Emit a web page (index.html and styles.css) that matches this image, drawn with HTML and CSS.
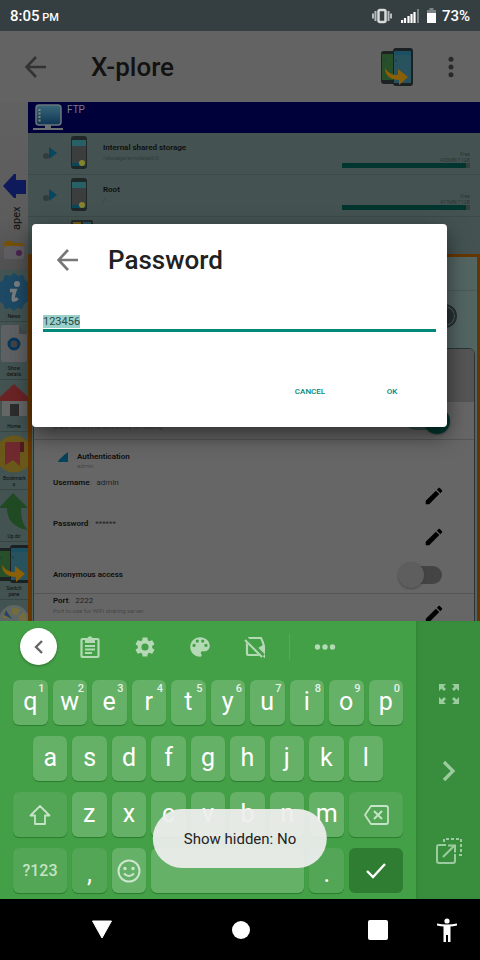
FILE: index.html
```html
<!DOCTYPE html>
<html lang="en">
<head>
<meta charset="utf-8">
<meta name="viewport" content="width=device-width, initial-scale=1">
<title>X-plore</title>
<link rel="stylesheet" href="styles.css">
</head>
<body>
<svg class="defs" aria-hidden="true">
  <symbol id="back" viewBox="0 0 22 22"><path d="M21 11H2M11 1L1.500 11l9.500 10" fill="none" stroke="currentColor" stroke-width="2.600"/></symbol>
  <symbol id="pencil" viewBox="0 0 24 24"><path fill="currentColor" d="M3 17.250V21h3.750L17.810 9.940l-3.750-3.750L3 17.250zM20.710 7.040c.39-.39.39-1.020 0-1.410l-2.340-2.340c-.39-.39-1.020-.39-1.410 0l-1.830 1.830 3.750 3.750 1.830-1.830z"/></symbol>
  <symbol id="phones" viewBox="0 0 32 38">
    <rect x="0" y="3" width="16" height="33" rx="3" fill="#1d2222"/><rect x="1" y="6" width="14" height="26" fill="#27502a"/>
    <rect x="12" y="0" width="20" height="38" rx="3" fill="#1b2022"/><rect x="13" y="3" width="17" height="32" fill="#28525e"/><rect x="13" y="3" width="17" height="4" fill="#1b4f62"/>
    <path d="M3 11v3M15 11v3" stroke="#1c3f40"/>
    <path d="M4 20c4 6 8 7 13 7v-6l10 8-9 8v-5C10 32 4 28 4 20z" fill="#8a5f08"/>
  </symbol>
  <symbol id="phone" viewBox="0 0 18 34">
    <rect x="1" y="0" width="16" height="33" rx="3" fill="#202727"/><rect x="2" y="4" width="14" height="26" fill="#3b3d3e"/><rect x="2" y="4" width="14" height="6" fill="#276067"/><rect x="2" y="27" width="14" height="3" fill="#07485b"/><circle cx="12" cy="27" r="3" fill="#85842c"/>
  </symbol>
  <symbol id="expand" viewBox="0 0 16 14"><circle cx="4" cy="10" r="3" fill="#323c3c"/><path d="M7 1l8 6-8 6z" fill="#05475f"/></symbol>
</svg>

<header class="status">
  <span class="clock">8:05 <small>PM</small></span>
  <svg class="vibrate" width="20" height="16" viewBox="0 0 20 16"><path d="M1 5.500v5M3.500 3v10M19 5.500v5M16.500 3v10" stroke="#b6bbbb" stroke-width="2"/><rect x="6.500" y="2" width="7" height="12" rx="1.500" fill="none" stroke="#d8dada" stroke-width="2.500"/></svg>
  <svg class="signal" width="18" height="14" viewBox="0 0 18 14"><path d="M1 14v-3M4 14V9M7.500 14V7M10.500 14V5M13.500 14V3" stroke="#fff" stroke-width="2.200"/><path d="M17 14V0" stroke="#7c8485" stroke-width="2"/></svg>
  <svg class="battery" width="9" height="15" viewBox="0 0 9 15"><path d="M2.500 0h4v2H9v3H0V2h2.500z" fill="#7b8384"/><path d="M0 5h9v10H0z" fill="#fff"/></svg>
  <span class="percent">73%</span>
</header>

<main class="app">
  <div class="toolbar">
    <button class="icon-button" aria-label="Back"><svg width="22" height="22"><use href="#back"/></svg></button>
    <h1>X-plore</h1>
    <button class="icon-button switch-pane" aria-label="Switch pane"><svg width="32" height="38"><use href="#phones"/></svg></button>
    <button class="icon-button" aria-label="More"><svg width="6" height="22" viewBox="0 0 6 22" fill="#292929"><circle cx="3" cy="3.300" r="2.500"/><circle cx="3" cy="11" r="2.500"/><circle cx="3" cy="18.700" r="2.500"/></svg></button>
  </div>

  <div class="browser">
    <nav class="rail">
      <div class="tab">
        <svg width="23" height="24" viewBox="0 0 23 24"><path d="M0 12L11 0h2v6h10v14H13v4h-2z" fill="#0e1a5c"/></svg>
        <span>apex</span>
        <svg width="20" height="18" viewBox="0 0 20 18"><path d="M0 3q0-3 3-3h5l2 2h9v8H0z" fill="#745109"/><rect x="0" y="5" width="20" height="13" rx="2" fill="#5f5d62"/><circle cx="15" cy="12" r="3" fill="#4b244f"/></svg>
      </div>
      <a href="#news"><svg viewBox="0 0 28 38"><path d="M14 0l4 3 5-1 2 5 4 3-1 5 2 4-2 4 1 5-5 3-2 5-5-1-3 3-4-3-5 1-2-5-4-3 1-5-2-4 2-4-1-5 4-3 2-5 5 1z" fill="#1d4964"/><circle cx="17" cy="11" r="3" fill="#777d80"/><path d="M10 17.500h5q-3 9-1.500 9.500 2 .5 4-2" fill="none" stroke="#777d80" stroke-width="3.500"/></svg>News</a>
      <a href="#details"><svg viewBox="0 0 28 38"><path d="M3 0h16l8 9v26q0 2-2 2H3q-2 0-2-2V2q0-2 2-2z" fill="#5e6061"/><path d="M19 0l8 9h-8z" fill="#454949"/><circle cx="14" cy="19" r="5" fill="#444" stroke="#06375e" stroke-width="3"/></svg>Show details</a>
      <a href="#home"><svg viewBox="0 0 28 38"><path d="M2 18h25v15H2z" fill="#656767"/><path d="M14 1l14 13v4H0v-4z" fill="#6b2325"/><path d="M10 21h9v12h-9z" fill="#2c2c2c"/></svg>Home</a>
      <a href="#bookmarks"><svg viewBox="0 0 28 38"><circle cx="14" cy="19" r="18.500" fill="#6a571a"/><path d="M5 9q0-2 2-2h17v10h-4v14l-7-6-8 5z" fill="#70292f"/><path d="M20 7h4v10h-4z" fill="#511a20"/></svg>Bookmark s</a>
      <a href="#up"><svg viewBox="0 0 28 38"><path d="M13 0l15 15h-7c0 11 2 17 7 22C15 35 7 28 7 15H-1z" fill="#1f4a23"/></svg>Up dir</a>
      <a href="#switch"><svg viewBox="2 0 28 38"><use href="#phones" width="32" height="38"/></svg>Switch pane</a>
      <a href="#tools" aria-label="Tools"><svg viewBox="0 0 28 38"><circle cx="14" cy="17" r="15" fill="#5d6667"/><circle cx="14" cy="17" r="9" fill="none" stroke="#756c3d" stroke-width="7" stroke-dasharray="7 3"/><path d="M4 12l8 4-6-9z" fill="#26456a"/></svg></a>
    </nav>

    <div class="panes">
      <div class="location">
        <svg width="32" height="27" viewBox="0 0 32 27"><defs><linearGradient id="screen" x2="0" y2="1"><stop stop-color="#3b687c"/><stop offset="1" stop-color="#0e3553"/></linearGradient></defs><rect x="4" y="1" width="25" height="20" rx="3" fill="url(#screen)" stroke="#68777b" stroke-width="1.500"/><path d="M7.500 5v13" stroke="#83867c" stroke-width="2" stroke-dasharray="2 1.500"/><path d="M13 21h6v3h12v2H1v-2h12z" fill="#6c716f"/></svg>
        <span>FTP</span>
      </div>
      <section class="storage">
        <div class="volume">
          <svg width="16" height="14"><use href="#expand"/></svg><svg width="18" height="34"><use href="#phone"/></svg>
          <div class="volume-name"><b>Internal shared storage</b><span>/storage/emulated/0</span></div>
          <div class="usage"><span>Free</span><span>420MB/11GB</span><div class="bar"></div></div>
        </div>
        <div class="volume">
          <svg width="16" height="14"><use href="#expand"/></svg><svg width="18" height="34"><use href="#phone"/></svg>
          <div class="volume-name"><b>Root</b><span>/</span></div>
          <div class="usage"><span>Free</span><span>417MB/11GB</span><div class="bar"></div></div>
        </div>
        <div class="volume next"><svg width="22" height="20" viewBox="0 0 22 20"><rect width="22" height="20" rx="2" fill="#252c2b"/><path d="M2 2h8v16H2z" fill="#755b10"/><path d="M12 2h8v16h-8z" fill="#255563"/></svg></div>
      </section>

      <section class="server">
        <div class="server-title"></div>
        <div class="server-state"><span class="dial"></span></div>
        <div class="card">
          <div class="card-head"></div>
          <div class="row readonly"><label class="hint" for="readonly">Share files on this device only for reading.</label><input class="switch" type="checkbox" id="readonly" checked></div>
          <div class="auth">
            <svg width="11" height="11" viewBox="0 0 11 11"><path d="M10 0v10H0c0-2 6-7 10-10z" fill="#06435c"/></svg>
            <div><b>Authentication</b><span class="hint">admin</span></div>
          </div>
          <div class="field"><p><b>Username</b><i>:</i> admin</p><button class="icon-button" aria-label="Edit username"><svg width="22" height="22"><use href="#pencil"/></svg></button></div>
          <div class="field"><p><b>Password</b><i>:</i> ******</p><button class="icon-button" aria-label="Edit password"><svg width="22" height="22"><use href="#pencil"/></svg></button></div>
          <div class="row"><label for="anonymous"><b>Anonymous access</b></label><input class="switch" type="checkbox" id="anonymous"></div>
          <div class="field"><div><p><b>Port</b><i>:</i> 2222</p><span class="hint">Port to use for WiFi sharing server.</span></div><button class="icon-button" aria-label="Edit port"><svg width="22" height="22"><use href="#pencil"/></svg></button></div>
        </div>
      </section>
    </div>
  </div>

  <form class="dialog" role="dialog" aria-labelledby="dialog-title">
    <div class="dialog-head">
      <button type="button" class="icon-button" aria-label="Close"><svg width="22" height="22"><use href="#back"/></svg></button>
      <h2 id="dialog-title">Password</h2>
    </div>
    <input class="password" id="password" type="text" value="123456" aria-labelledby="dialog-title" autofocus>
    <div class="actions"><button type="button">CANCEL</button><button type="button">OK</button></div>
  </form>
</main>

<section class="keyboard">
  <div class="board">
    <div class="tools">
      <button class="collapse" aria-label="Collapse"><svg width="12" height="16" viewBox="0 0 12 16"><path d="M9 2L3 8l6 6" fill="none" stroke="#666" stroke-width="2.400"/></svg></button>
      <button aria-label="Clipboard"><svg width="20" height="24" viewBox="0 0 20 24"><rect x="1.500" y="4" width="17" height="18" rx="1" fill="none" stroke="currentColor" stroke-width="2.200"/><path d="M5 3h2.500a2.700 2.700 0 0 1 5 0H15v5H5z" fill="currentColor"/><path d="M5 11h10M5 14.500h10M5 18h7" stroke="currentColor" stroke-width="1.800"/></svg></button>
      <button aria-label="Settings"><svg width="24" height="24" viewBox="0 0 24 24"><path fill="currentColor" d="M19.140 12.940c.04-.3.06-.61.06-.94 0-.32-.02-.64-.07-.94l2.030-1.580c.18-.14.23-.41.12-.61l-1.920-3.320c-.12-.22-.37-.29-.59-.22l-2.390.96c-.5-.38-1.030-.7-1.620-.94l-.36-2.540c-.04-.24-.24-.41-.48-.41h-3.840c-.24 0-.43.17-.47.41l-.36 2.540c-.59.24-1.130.57-1.620.94l-2.390-.96c-.22-.08-.47 0-.59.22L2.740 8.870c-.12.21-.08.47.12.61l2.030 1.580c-.05.3-.09.63-.09.94s.02.64.07.94l-2.030 1.580c-.18.14-.23.41-.12.61l1.920 3.320c.12.22.37.29.59.22l2.390-.96c.5.38 1.030.7 1.620.94l.36 2.540c.05.24.24.41.48.41h3.840c.24 0 .44-.17.47-.41l.36-2.540c.59-.24 1.130-.56 1.620-.94l2.390.96c.22.08.47 0 .59-.22l1.920-3.320c.12-.22.07-.47-.12-.61l-2.010-1.580zM12 15.600a3.600 3.600 0 1 1 0-7.200 3.600 3.600 0 0 1 0 7.200z"/></svg></button>
      <button aria-label="Theme"><svg width="26" height="26" viewBox="0 0 24 24"><path fill="currentColor" fill-rule="evenodd" d="M12 3c-4.970 0-9 4.030-9 9s4.030 9 9 9c.83 0 1.500-.67 1.500-1.500 0-.39-.15-.74-.39-1.010-.23-.26-.38-.61-.38-.99 0-.83.67-1.500 1.500-1.500H16c2.760 0 5-2.240 5-5 0-4.420-4.030-8-9-8zM6.500 12a1.500 1.500 0 1 1 0-3 1.500 1.500 0 0 1 0 3zm3-4a1.500 1.500 0 1 1 0-3 1.500 1.500 0 0 1 0 3zm5 0a1.500 1.500 0 1 1 0-3 1.500 1.500 0 0 1 0 3zm3 4a1.500 1.500 0 1 1 0-3 1.500 1.500 0 0 1 0 3z"/></svg></button>
      <button aria-label="Stickers off"><svg width="22" height="22" viewBox="0 0 22 22"><path d="M4 2h13q2 4 3 8v10l-6-6" fill="none" stroke="currentColor" stroke-width="2"/><path d="M3 6v12q0 1 1 1h12" fill="none" stroke="currentColor" stroke-width="2.200"/><path d="M10 9l4 3 5-3v10z" fill="currentColor"/><path d="M2 3l17 17" stroke="#44a047" stroke-width="5"/><path d="M1 4l17 17" stroke="currentColor" stroke-width="2"/></svg></button>
      <span class="divider"></span>
      <button aria-label="More tools"><svg width="22" height="6" viewBox="0 0 22 6" fill="currentColor"><circle cx="3.500" cy="3" r="2.700"/><circle cx="11" cy="3" r="2.700"/><circle cx="18.500" cy="3" r="2.700"/></svg></button>
    </div>
    <div class="keys">
      <button>q<sup>1</sup></button><button>w<sup>2</sup></button><button>e<sup>3</sup></button><button>r<sup>4</sup></button><button>t<sup>5</sup></button><button>y<sup>6</sup></button><button>u<sup>7</sup></button><button>i<sup>8</sup></button><button>o<sup>9</sup></button><button>p<sup>0</sup></button>
    </div>
    <div class="keys inset">
      <button>a</button><button>s</button><button>d</button><button>f</button><button>g</button><button>h</button><button>j</button><button>k</button><button>l</button>
    </div>
    <div class="keys">
      <button class="wide dim" aria-label="Shift"><svg width="24" height="22" viewBox="0 0 24 22"><path d="M12 2L2.500 11.500H7V20h10v-8.500h4.500z" fill="none" stroke="currentColor" stroke-width="1.800" stroke-linejoin="round"/></svg></button>
      <button>z</button><button>x</button><button>c</button><button>v</button><button>b</button><button>n</button><button>m</button>
      <button class="wide dim" aria-label="Backspace"><svg width="26" height="20" viewBox="0 0 26 20"><path d="M8 1h15q2 0 2 2v14q0 2-2 2H8L2 10z" fill="none" stroke="currentColor" stroke-width="1.800" stroke-linejoin="round"/><path d="M11 6l8 8M19 6l-8 8" stroke="currentColor" stroke-width="2"/></svg></button>
    </div>
    <div class="keys last">
      <button class="wide dim symbols">?123</button>
      <button class="dim low">,</button>
      <button class="soft" aria-label="Emoji"><svg width="24" height="24" viewBox="0 0 24 24"><circle cx="12" cy="12" r="10.500" fill="none" stroke="currentColor" stroke-width="2"/><circle cx="8" cy="9.500" r="1.700" fill="currentColor"/><circle cx="16" cy="9.500" r="1.700" fill="currentColor"/><path d="M7 14.500q5 5 10 0" fill="none" stroke="currentColor" stroke-width="2"/></svg></button>
      <button class="space" aria-label="Space"></button>
      <button class="dim low">.</button>
      <button class="wide enter" aria-label="Done"><svg width="22" height="18" viewBox="0 0 22 18"><path d="M2 9l6 6L20 2" fill="none" stroke="#fff" stroke-width="2.400"/></svg></button>
    </div>
  </div>
  <aside class="side">
    <button aria-label="Full size"><svg width="20" height="20" viewBox="0 0 20 20"><path d="M0 0h7L4.500 2.500 7 5 5 7 2.500 4.500 0 7zM20 0v7l-2.500-2.500L15 7l-2-2 2.500-2.500L13 0zM0 20v-7l2.500 2.500L5 13l2 2-2.500 2.500L7 20zM20 20h-7l2.500-2.500L13 15l2-2 2.500 2.500L20 13z" fill="currentColor"/></svg></button>
    <button aria-label="Move right"><svg width="14" height="22" viewBox="0 0 14 22"><path d="M2 2l9 9-9 9" fill="none" stroke="currentColor" stroke-width="3.200"/></svg></button>
    <button aria-label="Float"><svg width="26" height="26" viewBox="0 0 26 26"><path d="M10 7H3q-2 0-2 2v14q0 2 2 2h14q2 0 2-2v-7" fill="none" stroke="currentColor" stroke-width="2"/><path d="M7 19L19 7M12 7.500h7v7" fill="none" stroke="currentColor" stroke-width="2"/><path d="M8 4V1h17v16h-4" fill="none" stroke="currentColor" stroke-width="2" stroke-dasharray="3 2"/></svg></button>
  </aside>
</section>

<nav class="system">
  <div class="system-main">
    <button aria-label="Back"><svg width="22" height="20" viewBox="0 0 22 20"><path d="M1.500 1h19L11 18z" fill="#fff" stroke="#fff" stroke-linejoin="round"/></svg></button>
    <button aria-label="Home"><svg width="18" height="18" viewBox="0 0 18 18"><circle cx="9" cy="9" r="9" fill="#fff"/></svg></button>
    <button aria-label="Recent apps"><svg width="20" height="20" viewBox="0 0 20 20"><rect width="20" height="20" rx="2" fill="#fff"/></svg></button>
  </div>
  <button aria-label="Accessibility"><svg width="20" height="24" viewBox="0 0 20 24"><circle cx="10" cy="3" r="2.600" fill="#fff"/><path d="M0 5.500q10 2 20 0v2q-4 1-6.500 1V24H11v-7H9v7H6.500V8.500Q4 8.500 0 7.500z" fill="#fff"/></svg></button>
</nav>

<div class="toast" role="status">Show hidden: No</div>
<script>document.getElementById("password").select();</script>
</body>
</html>
```
FILE: styles.css
```css
* { box-sizing: border-box; }

body {
  margin: 0;
  height: 100vh;
  display: flex;
  flex-direction: column;
  position: relative;
  overflow: hidden;
  background: #000;
  font-family: Roboto, "Liberation Sans", sans-serif;
}

h1, h2, p { margin: 0; }
h1, h2 { font-size: 26px; font-weight: 500; line-height: 32px; }
svg { display: block; flex: none; }
.defs { position: absolute; width: 0; height: 0; }

button {
  display: flex;
  align-items: center;
  justify-content: center;
  padding: 0;
  border: 0;
  background: none;
  color: inherit;
  font: inherit;
}

/* Status bar */
.status {
  flex: none;
  display: flex;
  align-items: center;
  height: 31px;
  padding: 0 10px;
  background: #353e40;
  color: #fff;
  font-size: 15px;
  font-weight: 500;
}
.clock { flex: 1; }
.clock small { font-size: 11px; margin-left: -1px; }
.signal { margin-left: 9px; }
.battery { margin: 0 6px 0 8px; }

/* App */
.app {
  flex: 1;
  min-height: 0;
  display: flex;
  flex-direction: column;
  position: relative;
  overflow: hidden;
  background: #636363;
}
.toolbar {
  flex: none;
  display: flex;
  align-items: center;
  height: 71px;
  padding: 0 26px 0 25px;
  color: #333;
}
.toolbar h1 { flex: 1; margin-left: 44px; color: #121212; }
.switch-pane { margin-right: 35px; }
.browser { flex: 1; min-height: 0; display: grid; grid-template-columns: 28px minmax(0, 1fr); }

.rail {
  display: flex;
  flex-direction: column;
  min-height: 0;
  overflow: hidden;
  background: #425351;
}
.tab {
  flex: none;
  display: flex;
  flex-direction: column;
  align-items: center;
  height: 168px;
  padding-top: 72px;
  background: linear-gradient(#616161, #5c5c5c 70%, #505050);
  color: #111;
  font-size: 11px;
}
.tab span { height: 24px; margin: 8px 0 11px 5px; writing-mode: vertical-rl; transform: rotate(180deg); line-height: 14px; text-align: center; }
.rail a {
  flex: none;
  padding: 3px 3px 2px;
  border-bottom: 1px solid #374644;
  color: #0b0f0f;
  font-size: 5px;
  line-height: 6px;
  text-align: center;
  text-decoration: none;
}
.rail a svg { width: 28px; height: 38px; margin: 0 -3px 2px; }

.panes { display: flex; flex-direction: column; min-height: 0; }
.location {
  flex: none;
  display: flex;
  gap: 3px;
  height: 31px;
  padding: 2px 4px;
  background: #00003b;
  color: #7b7b8f;
  font-size: 10px;
  line-height: 12px;
}
.storage { flex: none; height: 121px; overflow: hidden; background: #445351; }
.volume {
  display: flex;
  align-items: center;
  height: 42px;
  padding: 0 10px 2px 14px;
  border-bottom: 1px solid #3c4a48;
}
.volume svg + svg { margin-left: 12px; }
.volume b, .volume span { display: block; }
.volume-name { flex: 1; margin-left: 15px; color: #0c0f0f; font-size: 8px; line-height: 10px; }
.volume-name span { color: #313c3b; font-size: 6px; line-height: 9px; }
.volume-name b, .card b { font-weight: 600; }
.usage { width: 128px; padding-top: 14px; color: #2b3534; font-size: 5px; line-height: 6px; text-align: right; }
.bar { height: 5px; background: linear-gradient(90deg, #00362f 97%, #353f3e 97%); }
.volume.next { align-items: flex-start; padding: 3px 0 0 43px; border: 0; }

.server {
  flex: 1;
  min-height: 0;
  overflow: hidden;
  border: solid #673600;
  border-width: 3px 3px 0 4px;
  background: #536563;
}
.server-title { height: 34px; border-bottom: 1px solid #495a58; }
.server-state { display: flex; align-items: center; justify-content: flex-end; height: 57px; padding: 0 20px 8px; }
.dial { width: 24px; height: 24px; border: 2px solid #293131; border-radius: 50%; background: #293131; box-shadow: inset 0 0 0 1px #536563; }
.card {
  margin: 0 2px 0 1px;
  border: 1px solid #2c3535;
  border-radius: 6px 6px 0 0;
  overflow: hidden;
  background: #666;
  color: #222;
  font-size: 8px;
  line-height: 10px;
}
.card b { color: #0d0d0d; }
.card i { color: #444; font-style: normal; margin-right: 3px; }
.card-head { height: 53px; background: #555; }
.card .hint { color: #474747; font-size: 6px; line-height: 8px; }
.row {
  display: flex;
  align-items: center;
  justify-content: space-between;
  height: 36px;
  padding: 0 32px 2px 19px;
  border-bottom: 1px solid #555;
}
.readonly { height: 38px; padding: 0 26px 0 19px; }
.readonly .hint { margin-top: 12px; }
.auth { display: flex; gap: 8px; height: 36px; padding: 12px 24px 0; }
.auth b, .auth span { display: block; }
.field { display: flex; justify-content: space-between; align-items: flex-start; height: 41px; padding: 2px 29px 0 19px; color: #222; }
.field p { font-size: 8px; }
.field button { margin-top: 7px; color: #000; }
.switch {
  appearance: none;
  position: relative;
  width: 42px;
  height: 18px;
  margin: 0;
  border-radius: 9px;
  background: #444;
}
.switch::before {
  content: "";
  position: absolute;
  top: -4px;
  left: -2px;
  width: 26px;
  height: 26px;
  border-radius: 50%;
  background: #5e5e5e;
  box-shadow: 0 1px 2px #3339;
}
.switch:checked { background: #35504d; }
.switch:checked::before { left: 18px; background: #00362f; }

/* Dialog */
.dialog {
  position: absolute;
  top: 193px;
  left: 32px;
  right: 33px;
  padding: 20px 11px 23px;
  border-radius: 4px;
  background: #fff;
  box-shadow: 0 8px 22px #0008;
}
.dialog-head { display: flex; align-items: center; gap: 29px; padding-left: 14px; color: #777; }
.dialog h2 { color: #212121; }
.password {
  display: block;
  width: 100%;
  height: 20px;
  margin-top: 36px;
  padding: 1px 0 0;
  border: 0;
  border-bottom: 3px solid #00897b;
  border-radius: 0;
  outline: 0;
  background: none;
  color: #333;
  font: 11px/14px Roboto, sans-serif;
}
.password::selection { background: #99d0ca; color: #2c4a47; }
.actions { display: flex; justify-content: flex-end; gap: 50px; margin-top: 47px; padding-right: 28px; }
.actions button { min-width: 32px; height: 25px; color: #00897b; font-size: 8px; font-weight: 500; }

/* Keyboard */
.keyboard { flex: none; display: grid; grid-template-columns: minmax(0, 1fr) 64px; background: #44a047; }
.board { padding: 7px 13px 6px; }
.tools { display: flex; align-items: center; height: 37px; margin: 0 0 15px; padding-left: 7px; color: #b4d9b5; }
.tools button { width: 55px; }
.tools .collapse { width: 37px; height: 37px; margin-right: 5px; border-radius: 50%; background: #fff; box-shadow: 0 1px 3px #0005; }
.divider { width: 1px; height: 26px; margin: 0 7px; background: #57aa59; }
.keys { display: flex; gap: 5px; margin-bottom: 11px; }
.keys.inset { padding: 0 20px; }
.keys.last { margin: 0; }
.keys button {
  flex: 1 1 0;
  min-width: 0;
  height: 45px;
  position: relative;
  padding-bottom: 3px;
  border-radius: 6px;
  background: #65b168;
  box-shadow: 0 1px 1px #2b7a2e;
  color: #fff;
  font-size: 25px;
}
.keys sup { position: absolute; top: 3px; right: 3px; color: #e5f3e5; font-size: 11px; font-weight: 500; line-height: 12px; }
.keys .wide { flex: 0 0 54px; padding: 0; }
.keys .dim { background: #53a656; color: #c5e3c6; }
.keys .soft { padding: 0; color: #cbe6cc; }
.keys .symbols { font-size: 16px; font-weight: 500; }
.keys .low { padding-top: 8px; color: #fff; }
.keys .space { flex: 0 0 153px; }
.keys .enter { background: #2e7d32; box-shadow: none; }
.side {
  display: flex;
  flex-direction: column;
  align-items: center;
  gap: 56px;
  padding: 63px 0 0 2px;
  background: #388e3c;
  box-shadow: inset 2px 0 2px #2f803388;
  color: #9ccb9f;
}

/* System navigation */
.system { flex: none; display: flex; align-items: center; gap: 49px; height: 61px; padding: 0 23px 0 91px; background: #000; }
.system-main { flex: 1; display: flex; align-items: center; justify-content: space-between; }

.toast {
  position: absolute;
  bottom: 92px;
  left: 50%;
  transform: translateX(-50%);
  padding: 20px 31px 19px;
  border-radius: 30px;
  background: #eeeeeeee;
  color: #222;
  font-size: 15px;
  line-height: 20px;
  white-space: nowrap;
}
```
